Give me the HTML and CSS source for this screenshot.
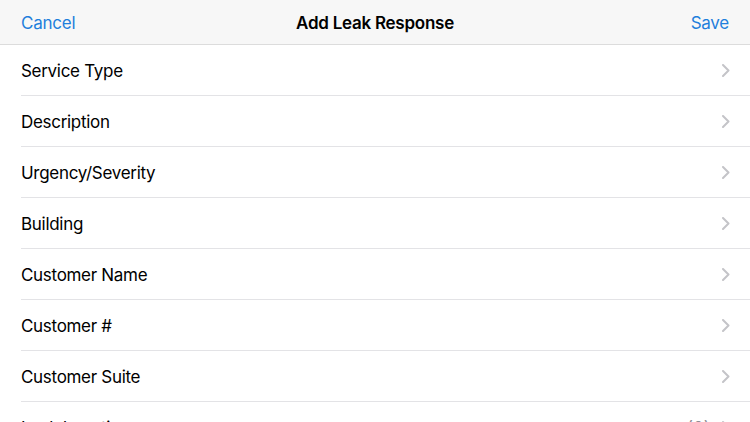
FILE: index.html
```html
<!DOCTYPE html>
<html>
<head>
<meta charset="utf-8">
<link rel="stylesheet" href="styles.css">
</head>
<body>
<div class="nav">
  <span class="nav-btn left">Cancel</span>
  <span class="nav-title">Add Leak Response</span>
  <span class="nav-btn right">Save</span>
</div>
<ul class="list">
  <li class="row"><span class="label">Service Type</span><svg class="chev" viewBox="0 0 8 13"><path d="M1 1l5.5 5.5L1 12"/></svg></li>
  <li class="row"><span class="label">Description</span><svg class="chev" viewBox="0 0 8 13"><path d="M1 1l5.5 5.5L1 12"/></svg></li>
  <li class="row"><span class="label">Urgency/Severity</span><svg class="chev" viewBox="0 0 8 13"><path d="M1 1l5.5 5.5L1 12"/></svg></li>
  <li class="row"><span class="label">Building</span><svg class="chev" viewBox="0 0 8 13"><path d="M1 1l5.5 5.5L1 12"/></svg></li>
  <li class="row"><span class="label">Customer Name</span><svg class="chev" viewBox="0 0 8 13"><path d="M1 1l5.5 5.5L1 12"/></svg></li>
  <li class="row"><span class="label">Customer #</span><svg class="chev" viewBox="0 0 8 13"><path d="M1 1l5.5 5.5L1 12"/></svg></li>
  <li class="row"><span class="label">Customer Suite</span><svg class="chev" viewBox="0 0 8 13"><path d="M1 1l5.5 5.5L1 12"/></svg></li>
  <li class="row"><span class="label">Leak Location</span><span class="count">(0)</span><svg class="chev" viewBox="0 0 8 13"><path d="M1 1l5.5 5.5L1 12"/></svg></li>
</ul>
</body>
</html>
```
FILE: styles.css
```css
html, body {
  margin: 0;
  padding: 0;
  background: #ffffff;
  width: 750px;
  height: 422px;
  overflow: hidden;
  font-family: "Inter", "Liberation Sans", sans-serif;
}
.nav {
  height: 45px;
  box-sizing: border-box;
  padding: 1px 21px 0;
  background: #f7f7f7;
  border-bottom: 1px solid #dcdcdc;
  display: grid;
  grid-template-columns: 1fr auto 1fr;
  align-items: center;
}
.nav-btn {
  color: #1f7fdc;
  font-size: 17px;
  letter-spacing: -0.25px;
}
.nav-btn.right {
  justify-self: end;
}
.nav-title {
  font-size: 17px;
  font-weight: 600;
  color: #000;
  letter-spacing: -0.25px;
}
.list {
  list-style: none;
  margin: 0;
  padding: 0 0 0 21px;
}
.row {
  height: 51px;
  box-sizing: border-box;
  padding-top: 1px;
  padding-right: 20px;
  border-bottom: 1px solid #e3e3e6;
  display: flex;
  align-items: center;
}
.label {
  flex: 1;
  font-size: 17px;
  color: #000;
  letter-spacing: -0.3px;
}
.count {
  font-size: 17px;
  color: #8e8e93;
  margin-right: 12px;
}
.chev {
  width: 8px;
  height: 13px;
  fill: none;
  stroke: #c4c4c8;
  stroke-width: 2;
  stroke-linecap: round;
  stroke-linejoin: round;
}
```
